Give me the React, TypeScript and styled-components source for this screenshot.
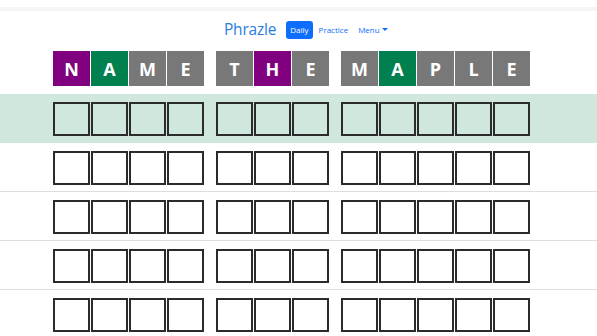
import styled, { createGlobalStyle } from 'styled-components';

const GlobalStyle = createGlobalStyle`
  body {
    margin: 0;
    background: #ffffff;
    font-family: "Open Sans", "Noto Sans", sans-serif;
  }
`;

type TileState = 'present' | 'correct' | 'absent';

const TILE_COLORS: Record<TileState, string> = {
  present: '#800080',
  correct: '#00804e',
  absent: '#787878',
};

const ANSWER: { letter: string; state: TileState }[][] = [
  [
    { letter: 'N', state: 'present' },
    { letter: 'A', state: 'correct' },
    { letter: 'M', state: 'absent' },
    { letter: 'E', state: 'absent' },
  ],
  [
    { letter: 'T', state: 'absent' },
    { letter: 'H', state: 'present' },
    { letter: 'E', state: 'absent' },
  ],
  [
    { letter: 'M', state: 'absent' },
    { letter: 'A', state: 'correct' },
    { letter: 'P', state: 'absent' },
    { letter: 'L', state: 'absent' },
    { letter: 'E', state: 'absent' },
  ],
];

const WORD_LENGTHS = [4, 3, 5];
const GUESS_ROWS = 5;

const S = {
  Page: styled.div`
    width: 597px;
    height: 336px;
    overflow: hidden;
  `,

  TopStrip: styled.div`
    height: 4px;
    margin-top: 7px;
    background-color: #f5f5f5;
  `,

  Header: styled.header`
    display: flex;
    align-items: center;
    height: 29px;
    padding-left: 224px;
    margin-top: 4px;
  `,

  Title: styled.h1`
    margin: 0 10px 0 0;
    font-size: 15.5px;
    font-weight: 400;
    letter-spacing: -0.2px;
    color: #2a7ee0;
    line-height: 1;
  `,

  NavButton: styled.button<{ $active?: boolean }>`
    height: 18px;
    padding: 0 ${({ $active }) => ($active ? '4px' : '0')};
    margin-right: ${({ $active }) => ($active ? '6px' : '10px')};
    border: none;
    border-radius: 3px;
    font-family: inherit;
    font-size: 8px;
    color: ${({ $active }) => ($active ? '#ffffff' : '#0d6efd')};
    background-color: ${({ $active }) => ($active ? '#0d6efd' : 'transparent')};
    display: flex;
    align-items: center;
    gap: 2px;
  `,

  Caret: styled.span`
    width: 0;
    height: 0;
    border-left: 3px solid transparent;
    border-right: 3px solid transparent;
    border-top: 3px solid #0d6efd;
  `,

  AnswerRow: styled.div`
    display: flex;
    justify-content: center;
    padding-right: 14px;
    margin-top: 7px;
    height: 43px;
  `,

  GuessRow: styled.div<{ $current?: boolean }>`
    display: flex;
    justify-content: center;
    align-items: flex-start;
    padding-right: 14px;
    padding-top: 8px;
    height: 49px;
    box-sizing: border-box;
    background-color: ${({ $current }) => ($current ? '#cfe7dc' : '#ffffff')};
    border-bottom: 1px solid ${({ $current }) => ($current ? '#cfe7dc' : '#dedede')};
  `,

  Word: styled.div`
    display: flex;
    gap: 1px;
    margin: 0 6px;
  `,

  Tile: styled.div<{ $state: TileState }>`
    width: 37px;
    height: 35px;
    display: flex;
    align-items: center;
    justify-content: center;
    box-sizing: border-box;
    background-color: ${({ $state }) => TILE_COLORS[$state]};
    color: #ffffff;
    font-size: 18px;
    font-weight: 700;
  `,

  EmptyTile: styled.div`
    width: 37px;
    height: 34px;
    box-sizing: border-box;
    border: 2px solid #2b2b2b;
  `,
};

function App() {
  return (
    <S.Page>
      <GlobalStyle />
      <S.TopStrip />
      <S.Header>
        <S.Title>Phrazle</S.Title>
        <S.NavButton $active>Daily</S.NavButton>
        <S.NavButton>Practice</S.NavButton>
        <S.NavButton>
          Menu <S.Caret />
        </S.NavButton>
      </S.Header>

      <S.AnswerRow>
        {ANSWER.map((word, w) => (
          <S.Word key={w}>
            {word.map((tile, i) => (
              <S.Tile key={i} $state={tile.state}>
                {tile.letter}
              </S.Tile>
            ))}
          </S.Word>
        ))}
      </S.AnswerRow>

      {Array.from({ length: GUESS_ROWS }).map((_, r) => (
        <S.GuessRow key={r} $current={r === 0}>
          {WORD_LENGTHS.map((len, w) => (
            <S.Word key={w}>
              {Array.from({ length: len }).map((__, i) => (
                <S.EmptyTile key={i} />
              ))}
            </S.Word>
          ))}
        </S.GuessRow>
      ))}
    </S.Page>
  );
}

export default App;
